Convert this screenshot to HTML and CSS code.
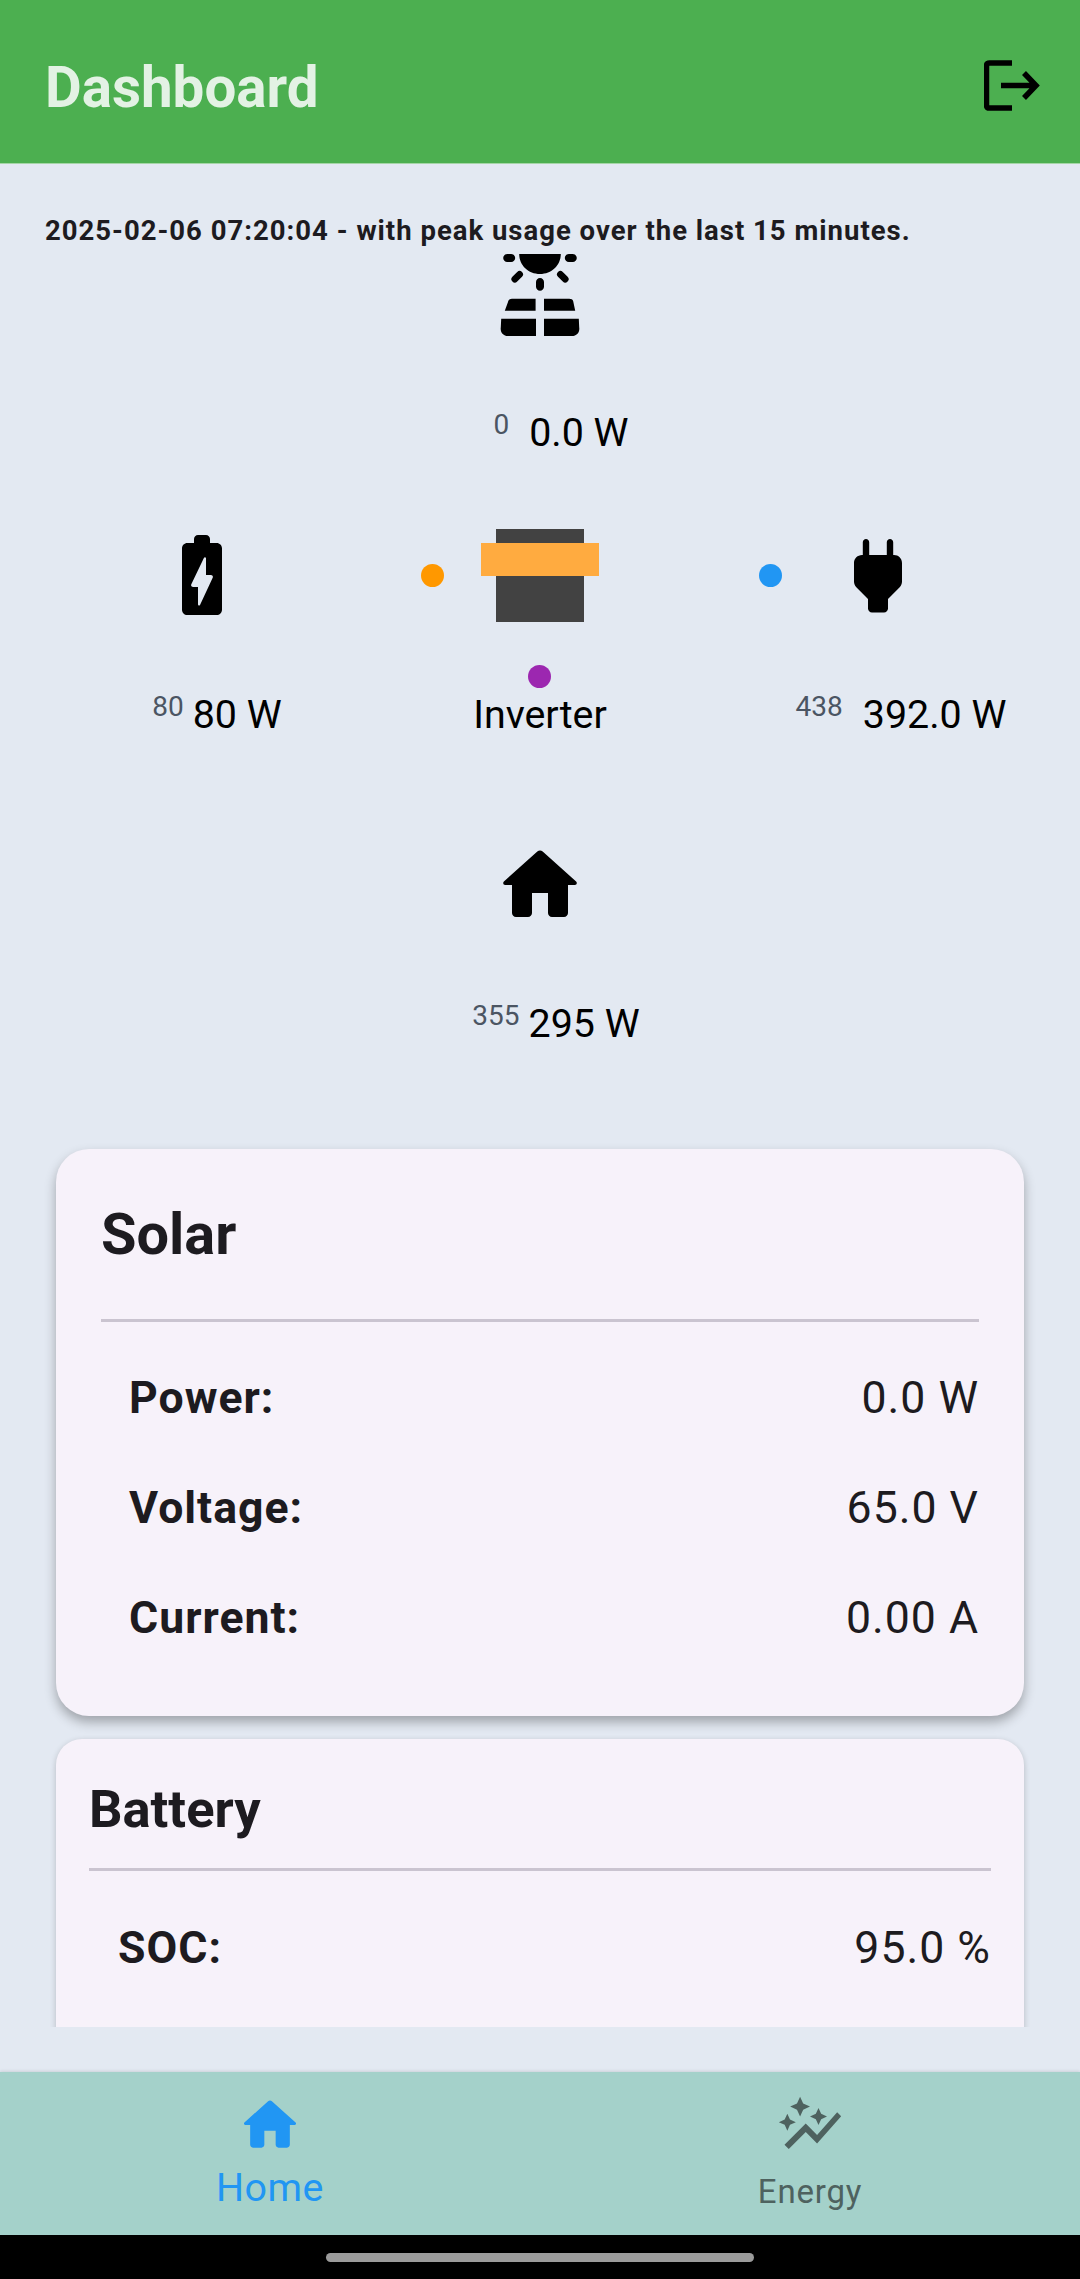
FILE: index.html
```html
<!DOCTYPE html>
<html>
<head>
	<meta charset="utf-8">
	<title>Dashboard</title>
	<link rel="stylesheet" href="styles.css">
</head>
<body>
<div class="app">
	<header class="topbar">
		<h1 class="title">Dashboard</h1>
		<svg class="logout" viewBox="0 0 56 51"><path d="M28 3H5.500Q2.500 3 2.500 6V45Q2.500 48 5.500 48H28M17 25.500H50M40 13L52 25.500L40 38" fill="none" stroke="#000" stroke-width="5.500"/></svg>
	</header>

	<main class="content">
		<p class="note">2025-02-06 07:20:04 - with peak usage over the last 15 minutes.</p>

		<div class="scroll">
			<div class="flow">
				<div class="node node-solar">
					<svg class="icon" viewBox="0 0 24 24">
						<path d="M6.800 2h10.400c0 2.870-2.330 5-5.200 5s-5.200-2.130-5.200-5zM3.800 2h1c.55 0 1 .45 1 1s-.45 1-1 1h-1c-.55 0-1-.45-1-1s.45-1 1-1zM19.200 2h1c.55 0 1 .45 1 1s-.45 1-1 1h-1c-.55 0-1-.45-1-1s.45-1 1-1zM12 8c.55 0 1 .45 1 1v1.200c0 .55-.45 1-1 1s-1-.45-1-1V9c0-.55.45-1 1-1zM3.200 16.200h7.700v-3H5c-.5 0-.9.3-1 .8zM13 16.200h7.800l-.5-2.400c-.1-.4-.5-.6-1-.6H13zM2.300 18.200H11v4.300H4c-1.200 0-2-1-1.800-2.200zM13 18.200h8.700l.1 2.100c.2 1.200-.6 2.200-1.800 2.200h-7z"/>
						<path d="M5.700 8.300L6.900 7.100M18.300 8.300L17.100 7.100" fill="none" stroke="#000" stroke-width="1.700" stroke-linecap="round"/>
					</svg>
					<div class="reading reading-solar"><span class="peak peak-wide">0</span><span>0.0 W</span></div>
				</div>

				<div class="flow-row">
					<div class="node node-battery">
						<svg class="icon" viewBox="0 0 24 24"><path fill-rule="evenodd" d="M15.670 4H14V3c0-.55-.45-1-1-1h-2c-.55 0-1 .45-1 1v1H8.330C7.600 4 7 4.600 7 5.330v15.330C7 21.400 7.600 22 8.330 22h7.330c.74 0 1.340-.6 1.340-1.330V5.330C17 4.600 16.400 4 15.670 4zM11.500 19.500c-.2.3-.5.1-.5-.2V15H9.800c-.4 0-.6-.3-.5-.6L12.500 7.700c.2-.3.5-.1.5.2V12h1.200c.4 0 .6.300.5.6z"/></svg>
						<div class="reading reading-battery"><span class="peak">80</span><span>80 W</span></div>
					</div>
					<div class="node node-inverter">
						<div class="inverter"><div class="inverter-band"></div></div>
						<div class="reading"><span>Inverter</span></div>
					</div>
					<div class="node node-grid">
						<svg class="icon" viewBox="0 0 24 24"><path d="M15.800 7V3.800c0-.44-.36-.8-.8-.8s-.8.36-.8.8V7H9.800V3.800c0-.44-.36-.8-.8-.8s-.8.36-.8.8V7h-.21C6.900 7 6 7.900 6 8.990v4.660c0 .53.210 1.040.58 1.410L9.500 18v2.400c0 .55.45 1 1 1h3c.55 0 1-.45 1-1V18l2.920-2.940c.37-.38.58-.89.58-1.420V8.990C18 7.890 17.110 7 16.010 7z"/></svg>
						<div class="reading reading-grid"><span class="peak peak-wide">438</span><span>392.0 W</span></div>
					</div>
					<span class="dot dot-battery"></span>
					<span class="dot dot-grid"></span>
					<span class="dot dot-home"></span>
				</div>

				<div class="node node-home">
					<svg class="icon" viewBox="0 0 24 24"><path d="M10 19v-5h4v5c0 .55.45 1 1 1h3c.55 0 1-.45 1-1v-7h1.700c.46 0 .68-.57.33-.87L12.670 3.600c-.38-.34-.96-.34-1.340 0l-8.360 7.530c-.34.3-.13.87.33.87H5v7c0 .55.45 1 1 1h3c.55 0 1-.45 1-1z"/></svg>
					<div class="reading reading-home"><span class="peak">355</span><span>295 W</span></div>
				</div>
			</div>

			<section class="card card-solar">
				<h2 class="card-title">Solar</h2>
				<hr class="rule">
				<div class="row"><span class="row-name">Power:</span><span class="row-value">0.0 W</span></div>
				<div class="row"><span class="row-name">Voltage:</span><span class="row-value">65.0 V</span></div>
				<div class="row"><span class="row-name">Current:</span><span class="row-value">0.00 A</span></div>
			</section>

			<section class="card card-battery">
				<h2 class="card-title">Battery</h2>
				<hr class="rule">
				<div class="row"><span class="row-name">SOC:</span><span class="row-value">95.0 %</span></div>
			</section>
		</div>
	</main>

	<nav class="tabs">
		<div class="tab tab-active">
			<svg class="tab-icon" viewBox="0 0 24 24"><path d="M10 19v-5h4v5c0 .55.45 1 1 1h3c.55 0 1-.45 1-1v-7h1.700c.46 0 .68-.57.33-.87L12.670 3.600c-.38-.34-.96-.34-1.340 0l-8.360 7.530c-.34.3-.13.87.33.87H5v7c0 .55.45 1 1 1h3c.55 0 1-.45 1-1z"/></svg>
			<span class="tab-label">Home</span>
		</div>
		<div class="tab">
			<svg class="tab-icon" viewBox="0 0 24 24"><path d="M14.060 9.940 12 9l2.060-.94L15 6l.94 2.060L18 9l-2.060.94L15 12zM4 14l.94-2.060L7 11l-2.060-.94L4 8l-.94 2.060L1 11l2.060.94zm4.500-5 1.090-2.410L12 5.500 9.590 4.410 8.500 2 7.410 4.410 5 5.500l2.410 1.090zm-4 11.500 6-6.010 4 4L23 8.930l-1.410-1.410-7.090 7.970-4-4L3 19z"/></svg>
			<span class="tab-label">Energy</span>
		</div>
	</nav>

	<div class="gesture"><span class="gesture-pill"></span></div>
</div>
</body>
</html>
```

FILE: styles.css
```css
* {
	box-sizing: border-box;
}

body {
	margin: 0;
	font-family: Roboto, "Noto Sans", sans-serif;
	color: #1d1b20;
}

.app {
	width: 1080px;
	height: 2279px;
	display: flex;
	flex-direction: column;
	background: #e3e9f2;
	overflow: hidden;
}

.topbar {
	height: 164px;
	flex: none;
	display: flex;
	align-items: center;
	justify-content: space-between;
	padding: 0 40px 0 45px;
	background: #4caf50;
	border-bottom: 1px solid #a5d6a7;
}

.title {
	margin: 12px 0 0;
	font-size: 56.500px;
	font-weight: 700;
	color: #e3f2e4;
}

.logout {
	width: 56px;
	height: 51px;
	margin-top: 7px;
}

.content {
	flex: 1;
	display: flex;
	flex-direction: column;
	min-height: 0;
	padding-top: 52px;
}

.note {
	margin: 0;
	padding: 0 45px;
	height: 30px;
	font-size: 27.500px;
	line-height: 30px;
	font-weight: 700;
	letter-spacing: 1px;
}

.scroll {
	height: 1781px;
	overflow: hidden;
	padding: 0 56px;
}

.flow {
	margin: 0 -23px;
}

.flow-row {
	position: relative;
	display: grid;
	grid-template-columns: repeat(3, 1fr);
	margin-top: 71px;
}

.node {
	display: flex;
	flex-direction: column;
	align-items: center;
}

.node-home {
	margin-top: 99px;
}

.icon {
	width: 96px;
	height: 96px;
	fill: #000;
	display: block;
}

.reading {
	display: flex;
	margin-top: 68px;
	font-size: 39.400px;
	line-height: 46px;
	white-space: nowrap;
	color: #000;
}

.flow-row .reading {
	margin-top: 69px;
}

.reading-solar {
	padding-left: 42px;
}

.reading-battery {
	padding-left: 30px;
}

.reading-grid {
	padding-left: 46px;
}

.node-home .reading {
	padding-left: 32px;
}

.peak {
	font-size: 28px;
	line-height: 30px;
	color: #4b5563;
	margin: 0 9px 0 0;
}

.peak-wide {
	margin-right: 20px;
}

.inverter {
	position: relative;
	width: 88px;
	height: 93px;
	margin-top: 2px;
	display: flex;
	align-items: flex-start;
	justify-content: center;
	background: #424242;
}

.inverter-band {
	width: 118px;
	height: 33px;
	margin-top: 14px;
	flex: none;
	background: #ffab40;
}

.flow-row .node-inverter .reading {
	margin-top: 70px;
}

.dot {
	position: absolute;
	width: 23px;
	height: 23px;
	border-radius: 50%;
}

.dot-battery {
	left: 388px;
	top: 37px;
	background: #ff9800;
}

.dot-grid {
	left: 726px;
	top: 37px;
	background: #2196f3;
}

.dot-home {
	left: 495px;
	top: 138px;
	background: #9c27b0;
}

.card {
	background: #f7f2fa;
	overflow: hidden;
}

.card-solar {
	margin-top: 102px;
	height: 567px;
	padding: 54px 45px 0;
	border-radius: 33px;
	box-shadow: 0 6px 12px rgba(0, 0, 0, 0.3);
}

.card-battery {
	margin-top: 23px;
	height: 400px;
	padding: 41px 33px 0;
	border-radius: 26px;
	box-shadow: 0 2px 6px rgba(0, 0, 0, 0.2);
}

.card-title {
	margin: 0;
	font-weight: 700;
	font-size: 57.700px;
	line-height: 62px;
}

.card-battery .card-title {
	font-size: 52.500px;
	line-height: 58px;
}

.rule {
	margin: 54px 0 21px;
	border: 0;
	height: 3px;
	background: #cac4d0;
}

.card-battery .rule {
	margin: 30px 0 22px;
}

.row {
	display: flex;
	justify-content: space-between;
	align-items: center;
	height: 110px;
	padding-left: 28px;
	font-size: 44.600px;
	letter-spacing: 1px;
}

.card-battery .row {
	padding-left: 29px;
}

.row-name {
	font-weight: 700;
	letter-spacing: 1px;
}

.tabs {
	height: 163px;
	flex: none;
	display: grid;
	grid-template-columns: 1fr 1fr;
	background: #a4d1ca;
	box-shadow: 0 -1px 3px rgba(0, 0, 0, 0.1);
}

.tab {
	display: flex;
	flex-direction: column;
	align-items: center;
	padding-top: 19px;
	color: #4e625f;
	fill: #4e625f;
}

.tab-icon {
	width: 68px;
	height: 68px;
	display: block;
}

.tab-label {
	font-size: 33px;
	line-height: 37px;
	margin-top: 14px;
	letter-spacing: 0.800px;
}

.tab-active {
	color: #2196f3;
	fill: #2196f3;
}

.tab-active .tab-label {
	font-size: 39.400px;
	line-height: 46px;
	margin-top: 6px;
	letter-spacing: 0.500px;
}

.gesture {
	height: 44px;
	flex: none;
	display: flex;
	justify-content: center;
	padding-top: 18px;
	background: #000;
}

.gesture-pill {
	width: 428px;
	height: 9px;
	border-radius: 5px;
	background: #9b9b9b;
}
```
